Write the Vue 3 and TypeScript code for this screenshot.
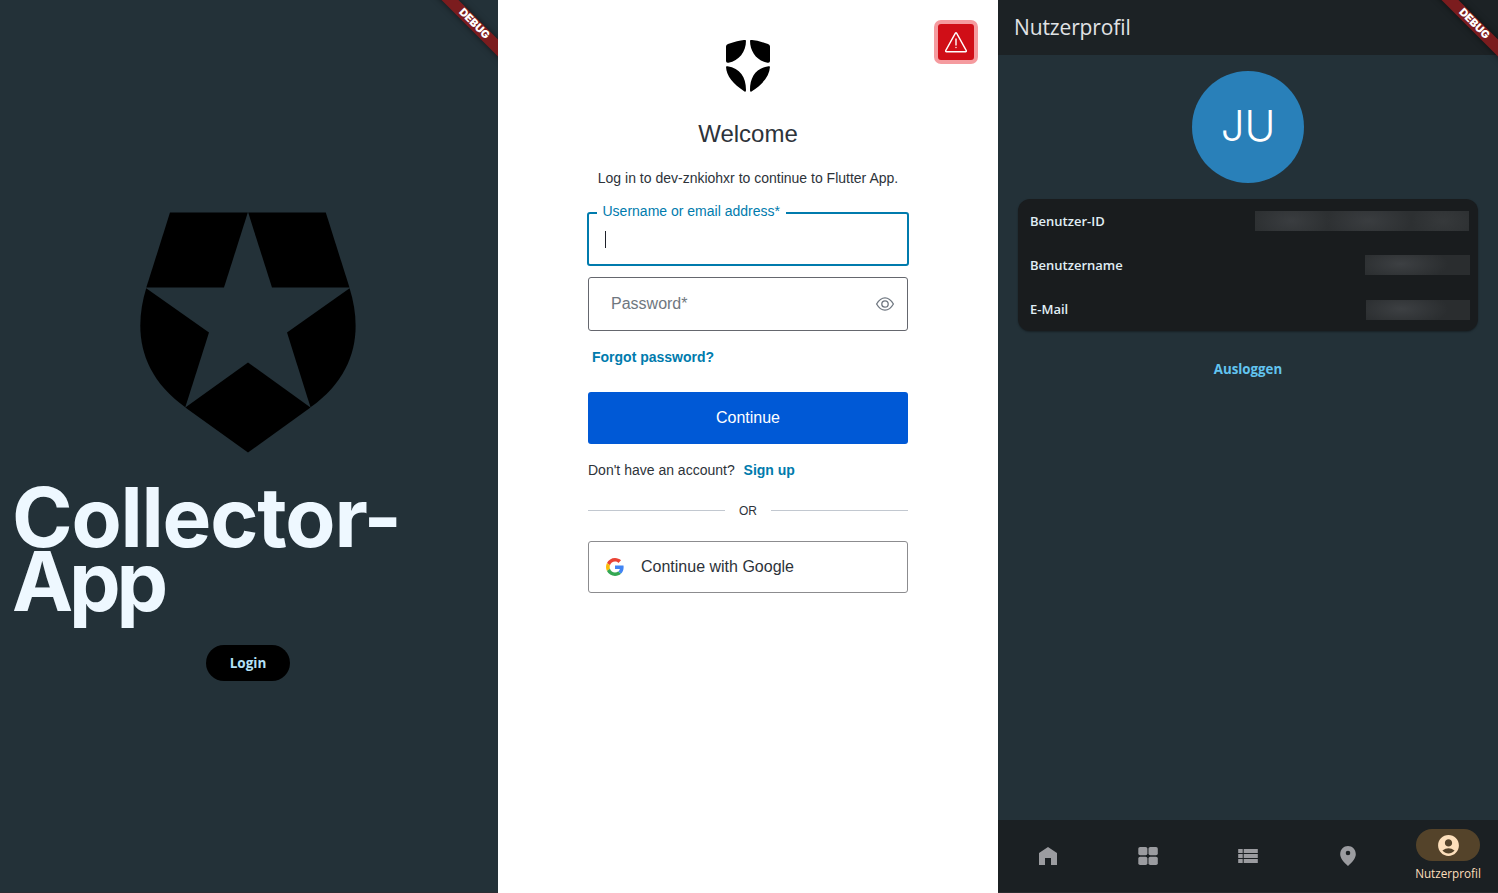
<script setup lang="ts">
interface ProfileRow {
  label: string
  kind: string
}

const rows: ProfileRow[] = [
  { label: 'Benutzer-ID', kind: 'id' },
  { label: 'Benutzername', kind: 'name' },
  { label: 'E-Mail', kind: 'mail' },
]
</script>

<template>
  <div class="screens">
    <section class="screen start">
      <div class="banner">DEBUG</div>
      <svg class="shield" viewBox="140 212 216 241" width="216" height="241">
        <path d="M170 212.6H247.8L224 287.6H146.3Z" />
        <path d="M248.2 212.6H325.8L349.5 287.6H272Z" />
        <path d="M146.2 288.2L209 332.4L185.3 407.2C139 374 133.500 330 146.2 288.2Z" />
        <path d="M349.6 288.2L287 332.4L310.5 407.2C357 374 362.500 330 349.6 288.2Z" />
        <path d="M248 362.5L310.5 407.6L248 452.5L185.3 407.6Z" />
      </svg>
      <h1 class="title"><span class="line one">Collector-</span><span class="line two">App</span></h1>
      <button class="login">Login</button>
    </section>

    <section class="screen auth">
      <div class="alert">
        <svg viewBox="0 0 24 24" width="24" height="24" fill="none" stroke="#fff" stroke-width="1.4" stroke-linejoin="round" stroke-linecap="round">
          <path d="M11.400 3.200Q12 2.400 12.600 3.200L22.300 20.600Q22.600 21.700 21.600 21.700H2.400Q1.400 21.700 1.700 20.600Z" />
          <path d="M12 9V15M12 17.400V17.600" />
        </svg>
      </div>
      <svg class="mark" viewBox="0 0 44 52" width="44" height="52">
        <path d="M20 0.600C20 12 13 21 2.500 22.700Q0 23.200 0 21V6.500Q0 4.500 2 4Q12 .5 18 0Q20 -.1 20 .6Z" />
        <path d="M24 0.600C24 12 31 21 41.500 22.700Q44 23.200 44 21V6.500Q44 4.500 42 4Q32 .5 26 0Q24 -.1 24 .6Z" />
        <path d="M0 26.800Q0 26 1.500 26.200C14 28 20 37 20 50Q20 52.500 18.500 51.500C7 44 .5 36 0 26.800Z" />
        <path d="M44 26.800Q44 26 42.500 26.200C30 28 24 37 24 50Q24 52.500 25.500 51.500C37 44 43.500 36 44 26.800Z" />
      </svg>
      <h2 class="welcome">Welcome</h2>
      <p class="intro">Log in to dev-znkiohxr to continue to Flutter App.</p>
      <div class="field focused">
        <span class="legend">Username or email address*</span>
        <span class="caret"></span>
      </div>
      <div class="field password">
        <span>Password*</span>
        <svg viewBox="0 0 20 16" width="20" height="16" fill="none" stroke="#6f7780" stroke-width="1.3">
          <path d="M1.600 8C4 3.800 7 1.800 10 1.800S16 3.800 18.400 8C16 12.200 13 14.200 10 14.200S4 12.200 1.600 8Z" />
          <circle cx="10" cy="8" r="3.200" />
        </svg>
      </div>
      <a class="forgot">Forgot password?</a>
      <button class="continue">Continue</button>
      <p class="signup">Don't have an account? <a>Sign up</a></p>
      <div class="divider"><span>OR</span></div>
      <button class="google">
        <svg viewBox="0 0 48 48" width="18" height="18">
          <path fill="#EA4335" d="M24 9.500c3.540 0 6.710 1.220 9.210 3.600l6.850-6.850C35.900 2.380 30.470 0 24 0 14.620 0 6.510 5.380 2.560 13.220l7.980 6.190C12.430 13.720 17.740 9.500 24 9.500z" />
          <path fill="#4285F4" d="M46.980 24.550c0-1.570-.15-3.090-.38-4.550H24v9.020h12.940c-.58 2.960-2.260 5.480-4.780 7.180l7.730 6c4.510-4.180 7.090-10.360 7.090-17.650z" />
          <path fill="#FBBC05" d="M10.530 28.590c-.48-1.450-.76-2.990-.76-4.590s.27-3.140.76-4.590l-7.980-6.190C.92 16.460 0 20.120 0 24c0 3.880.92 7.540 2.560 10.780l7.970-6.190z" />
          <path fill="#34A853" d="M24 48c6.480 0 11.930-2.130 15.890-5.810l-7.730-6c-2.150 1.450-4.920 2.300-8.160 2.300-6.260 0-11.570-4.220-13.470-9.910l-7.980 6.190C6.510 42.620 14.620 48 24 48z" />
        </svg>
        <span>Continue with Google</span>
      </button>
    </section>

    <section class="screen profile">
      <div class="banner">DEBUG</div>
      <header class="bar"><span>Nutzerprofil</span></header>
      <main class="content">
        <div class="avatar"><span>JU</span></div>
        <div class="card">
          <div v-for="row in rows" :key="row.kind" class="row">
            <span class="label">{{ row.label }}</span>
            <span class="redacted" :class="row.kind"></span>
          </div>
        </div>
        <a class="logout">Ausloggen</a>
      </main>
      <nav class="tabs">
        <div class="tab">
          <svg viewBox="0 0 24 24" width="24" height="24"><path d="M3 21V9l9-6 9 6v12h-6v-7H9v7z" /></svg>
        </div>
        <div class="tab">
          <svg viewBox="0 0 24 24" width="24" height="24">
            <rect x="2.300" y="3" width="9.100" height="8.200" rx="1.800" />
            <rect x="12.500" y="3" width="9.300" height="8.200" rx="1.800" />
            <rect x="2.300" y="12.800" width="9.100" height="8.200" rx="1.800" />
            <rect x="12.500" y="12.800" width="9.300" height="8.200" rx="1.800" />
          </svg>
        </div>
        <div class="tab">
          <svg viewBox="0 0 24 24" width="24" height="24"><path d="M2.200 5h4.500v4H2.200zM7.700 5h14.100v4H7.700zM2.200 10h4.500v4H2.200zM7.700 10h14.100v4H7.700zM2.200 15h4.500v4H2.200zM7.700 15h14.100v4H7.700z" /></svg>
        </div>
        <div class="tab">
          <svg viewBox="0 0 24 24" width="24" height="24"><path fill-rule="evenodd" d="M12 2C7.800 2 4.200 5.220 4.200 10.200c0 3.320 2.600 7.250 7.800 11.800 5.200-4.550 7.800-8.480 7.800-11.800C19.800 5.220 16.200 2 12 2zm0 9.300a2.300 2.300 0 1 1 0-4.600 2.300 2.300 0 0 1 0 4.600z" /></svg>
        </div>
        <div class="tab active">
          <div class="pill">
            <svg viewBox="0 0 24 24" width="25" height="25"><path fill-rule="evenodd" d="M12 2C6.480 2 2 6.480 2 12s4.480 10 10 10 10-4.480 10-10S17.520 2 12 2zm0 4c1.930 0 3.500 1.570 3.500 3.500S13.930 13 12 13s-3.500-1.570-3.500-3.500S10.070 6 12 6zm0 13.600c-2.030 0-4.230-.8-5.840-2.780a9.950 9.950 0 0 1 11.680 0C16.230 18.800 14.030 19.600 12 19.600z" /></svg>
          </div>
          <span>Nutzerprofil</span>
        </div>
      </nav>
    </section>
  </div>
</template>

<style>
body {
  background: #fff;
  overflow: hidden;
}
</style>

<style scoped>
* {
  box-sizing: border-box;
}
.screens {
  display: grid;
  grid-template-columns: 498px 500px 500px;
  width: 1498px;
  height: 893px;
  overflow: hidden;
  font-family: "Open Sans", "Noto Sans", sans-serif;
}
.screen {
  position: relative;
  overflow: hidden;
  display: flex;
  flex-direction: column;
}
h1, h2, p {
  margin: 0;
  font-weight: 400;
}
button {
  border: 0;
  padding: 0;
  font: inherit;
}
.banner {
  position: absolute;
  z-index: 2;
  top: 17.500px;
  right: -26px;
  width: 100px;
  height: 12px;
  transform: rotate(45deg);
  background: #7b1c1e;
  box-shadow: 0 0 6px rgba(0, 0, 0, 0.5);
  color: #fff;
  font: 900 10.800px/12px Inter, sans-serif;
  text-align: center;
}
.start {
  background: #233138;
  align-items: center;
  padding-right: 2px;
  border-bottom: 1px solid #2b2d33;
}
.shield {
  margin-top: 212px;
  flex: none;
}
.title {
  align-self: stretch;
  margin-top: 33px;
  padding-left: 12px;
  display: flex;
  flex-direction: column;
  color: #eef8ff;
  font: 700 82px/64px Inter, sans-serif;
}
.line {
  white-space: nowrap;
}
.one {
  letter-spacing: -1.200px;
}
.two {
  letter-spacing: -4.200px;
}
.login {
  margin-top: 31px;
  padding-bottom: 1px;
  width: 84px;
  height: 36px;
  border-radius: 18px;
  background: #000;
  color: #b3e1f8;
  font-size: 13.500px;
  font-weight: 700;
}
.auth {
  background: #fff;
  align-items: center;
  font-family: "Liberation Sans", Arial, sans-serif;
  color: #2d333a;
}
.alert {
  position: absolute;
  top: 20px;
  right: 20px;
  width: 44px;
  height: 44px;
  border: 4px solid #f59b9f;
  border-radius: 7px;
  background: #d00e17;
  display: grid;
  place-items: center;
}
.mark {
  margin-top: 40px;
  flex: none;
}
.welcome {
  margin-top: 27px;
  font-size: 24px;
  line-height: 30px;
}
.intro {
  margin-top: 19px;
  font-size: 14px;
  line-height: 20px;
}
.field {
  width: 320px;
  border-radius: 3px;
  display: flex;
  align-items: center;
}
.focused {
  position: relative;
  width: 322px;
  height: 54px;
  margin-top: 24px;
  padding-left: 16px;
  border: 2px solid #007bad;
}
.legend {
  position: absolute;
  left: 8px;
  top: -12px;
  padding: 0 6px 0 5.500px;
  background: #fff;
  color: #007bad;
  font-size: 14px;
  line-height: 18px;
}
.caret {
  width: 1px;
  height: 17px;
  background: #1e212a;
}
.password {
  height: 54px;
  margin-top: 11px;
  padding: 0 12px 0 22px;
  border: 1px solid #65676e;
  justify-content: space-between;
  color: #6f7780;
  font-size: 16px;
}
.forgot {
  align-self: flex-start;
  margin: 17px 0 0 94px;
  color: #007bad;
  font-size: 14px;
  font-weight: 700;
  line-height: 18px;
}
.continue {
  flex: none;
  width: 320px;
  height: 52px;
  margin-top: 26px;
  border-radius: 3px;
  background: #0059d6;
  color: #fff;
  font-size: 16px;
}
.signup {
  width: 320px;
  margin-top: 16px;
  font-size: 14px;
  line-height: 20px;
}
.signup a {
  margin-left: 5px;
  color: #007bad;
  font-weight: 700;
}
.divider {
  width: 320px;
  margin-top: 20px;
  display: flex;
  align-items: center;
  gap: 14px;
  font-size: 12px;
  line-height: 20px;
}
.divider span {
  padding-top: 1px;
  margin-bottom: -1px;
}
.divider::before,
.divider::after {
  content: "";
  flex: 1;
  height: 1px;
  background: #c2c8d0;
}
.google {
  flex: none;
  width: 320px;
  height: 52px;
  margin-top: 21px;
  padding-left: 17px;
  border: 1px solid #8c8c8f;
  border-radius: 3px;
  background: #fff;
  color: #2d333a;
  display: flex;
  align-items: center;
  gap: 17px;
  font-size: 16px;
}
.profile {
  background: #233138;
}
.bar {
  height: 55px;
  flex: none;
  padding: 0 0 2px 16px;
  background: #1c2225;
  color: #e0e3e5;
  display: flex;
  align-items: center;
  font-size: 21px;
  letter-spacing: -0.130px;
}
.content {
  flex: 1;
  display: flex;
  flex-direction: column;
  align-items: center;
}
.avatar {
  width: 112px;
  height: 112px;
  flex: none;
  margin-top: 16px;
  padding-bottom: 2px;
  border-radius: 50%;
  background: #2980b9;
  color: #fff;
  display: grid;
  place-items: center;
  font: 300 42px/1 Inter, sans-serif;
}
.card {
  width: 460px;
  height: 132px;
  margin-top: 16px;
  border-radius: 12px;
  background: #191c1e;
  box-shadow: 0 1px 2px rgba(0, 0, 0, 0.35);
}
.row {
  height: 44px;
  padding: 0 8px 0 12px;
  display: flex;
  align-items: center;
  justify-content: space-between;
}
.label {
  color: #e0eef5;
  font-size: 13px;
  font-weight: 600;
}
.redacted {
  height: 20px;
  background: radial-gradient(ellipse 45% 90% at 34% 45%, #3d4043, transparent), #2a2d2f;
}
.redacted.id {
  width: 214px;
  margin-right: 1px;
  background: radial-gradient(ellipse 18% 100% at 17% 50%, #3a3d40, transparent), radial-gradient(ellipse 20% 100% at 53% 50%, #3a3d40, transparent), radial-gradient(ellipse 15% 100% at 88% 50%, #36393b, transparent), #2d3032;
}
.redacted.name {
  width: 105px;
}
.redacted.mail {
  width: 104px;
  margin-top: 2px;
}
.logout {
  margin-top: 28px;
  color: #62c4f0;
  font-size: 13.300px;
  font-weight: 700;
  line-height: 20px;
}
.tabs {
  height: 73px;
  flex: none;
  display: grid;
  grid-template-columns: repeat(5, 1fr);
  background: #1b2023;
  border-bottom: 1px solid #292c2f;
}
.tab {
  display: flex;
  flex-direction: column;
  align-items: center;
  justify-content: center;
  fill: #9b9ca0;
}
.active {
  justify-content: flex-start;
  padding-top: 9px;
  fill: #fddfbb;
  color: #fddfbb;
  font-size: 11.700px;
  line-height: 18px;
}
.active span {
  margin-top: 3px;
}
.pill {
  width: 64px;
  height: 32px;
  flex: none;
  border-radius: 16px;
  background: #54432a;
  display: grid;
  place-items: center;
}
</style>
